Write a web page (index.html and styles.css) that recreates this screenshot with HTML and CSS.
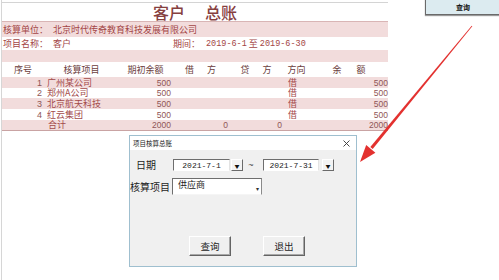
FILE: index.html
```html
<!DOCTYPE html>
<html lang="zh-CN">
<head>
    <meta charset="UTF-8">
    <title>客户总账</title>
    <link rel="stylesheet" href="styles.css">
</head>
<body>

<div class="page">
    <div class="sheet">
        <div class="title"><span>客户</span><span>总账</span></div>

        <div class="info unit pink">
            <span class="label">核算单位：</span>
            <span>北京时代传奇教育科技发展有限公司</span>
        </div>
        <div class="info name-row">
            <span class="label">项目名称：</span>
            <span class="value">客户</span>
            <span>期间：</span>
            <span class="date first">2019-6-1</span>
            <span>至</span>
            <span class="date">2019-6-30</span>
        </div>
        <div class="blank pink"></div>

        <div class="grid head">
            <span>序号</span>
            <span>核算项目</span>
            <span>期初余额</span>
            <span class="split"><span>借</span><span>方</span></span>
            <span class="split"><span>贷</span><span>方</span></span>
            <span>方向</span>
            <span class="split wide"><span>余</span><span>额</span></span>
        </div>

        <div class="grid data pink tall">
            <span class="num">1</span><span class="name">广州某公司</span><span class="amt">500</span>
            <span></span><span></span><span class="dir">借</span><span class="amt">500</span>
        </div>
        <div class="grid data short">
            <span class="num">2</span><span class="name">郑州A公司</span><span class="amt">500</span>
            <span></span><span></span><span class="dir">借</span><span class="amt">500</span>
        </div>
        <div class="grid data pink tall">
            <span class="num">3</span><span class="name">北京航天科技</span><span class="amt">500</span>
            <span></span><span></span><span class="dir">借</span><span class="amt">500</span>
        </div>
        <div class="grid data tall">
            <span class="num">4</span><span class="name">红云集团</span><span class="amt">500</span>
            <span></span><span></span><span class="dir">借</span><span class="amt">500</span>
        </div>
        <div class="grid data pink short total">
            <span></span><span class="name">合计</span><span class="amt">2000</span>
            <span class="amt">0</span><span class="amt">0</span><span></span><span class="amt">2000</span>
        </div>
    </div>
</div>

<div class="sheet-button">查询</div>

<svg class="arrow" width="499" height="280" viewBox="0 0 499 280">
    <polygon points="472.3,26.3 372.7,149.0 370.3,147.0 471.7,25.7" fill="#e3312f"/>
    <polygon points="360,162 375.4,152.7 366.2,145.1" fill="#e3312f"/>
</svg>

<div class="dialog">
    <div class="dlg-title">
        <span>项目核算总账</span>
        <svg class="close" width="7" height="7" viewBox="0 0 7 7">
            <path d="M0.5 0.5 L6.5 6.5 M6.5 0.5 L0.5 6.5" stroke="#333" stroke-width="0.9"/>
        </svg>
    </div>
    <div class="dlg-body">
        <div class="dlg-row dates">
            <span class="dlg-label date-label">日期</span>
            <span class="field">2021-7-1</span>
            <span class="drop">▼</span>
            <span class="tilde">~</span>
            <span class="field second">2021-7-31</span>
            <span class="drop far">▼</span>
        </div>
        <div class="dlg-row items">
            <span class="dlg-label item-label">核算项目</span>
            <span class="combo"><span>供应商</span><span class="combo-arrow">▾</span></span>
        </div>
        <div class="dlg-actions">
            <button class="btn">查询</button>
            <button class="btn">退出</button>
        </div>
    </div>
</div>

</body>
</html>
```

FILE: styles.css
```css
body {
    margin: 0;
    width: 499px;
    height: 280px;
    overflow: hidden;
    position: relative;
    background: #fff;
    font-family: "Noto Sans CJK SC", "Liberation Sans", sans-serif;
}
.page {
    box-sizing: border-box;
    height: 280px;
    margin-left: 1px;
    padding-top: 2px;
    border-left: 1px solid #d6d6d6;
}
.sheet {
    width: 386px;
    border-top: 1px solid #d4d4d4;
    border-bottom: 1px solid #c9a3a3;
}
.pink {
    background-color: #f2dcdc;
}
.title {
    height: 18px;
    display: flex;
    justify-content: center;
    gap: 20px;
    font-size: 16px;
    line-height: 18px;
    font-weight: 500;
    color: #86403f;
}
.info {
    display: flex;
    align-items: center;
    padding-left: 1px;
    font-size: 9px;
    line-height: 10px;
    color: #a34545;
}
.unit {
    height: 15px;
    border-top: 1px solid #d9b5b5;
}
.name-row {
    height: 13px;
}
.info .label {
    width: 50px;
}
.info .value {
    width: 120px;
}
.date {
    font-family: "Liberation Mono", monospace;
    font-size: 8.5px;
    margin-right: 2px;
}
.date.first {
    margin-left: 6px;
}
.date + span {
    margin-right: 2px;
}
.blank {
    height: 12px;
}
.grid {
    display: grid;
    grid-template-columns: 42px 75px 53px 57px 54px 27px 78px;
    align-items: center;
    font-size: 9px;
    line-height: 10px;
}
.head {
    height: 15px;
    color: #6b3d3d;
    text-align: center;
}
.split {
    display: flex;
    justify-content: center;
    gap: 13px;
}
.split.wide {
    gap: 15px;
}
.data {
    color: #a34a4a;
}
.tall {
    height: 11px;
}
.short {
    height: 10px;
}
.num {
    text-align: right;
    padding-right: 2px;
    font-family: "Liberation Sans", sans-serif;
    color: #8f5656;
}
.name {
    padding-left: 3px;
}
.total .name {
    padding-left: 4px;
}
.amt {
    text-align: right;
    padding-right: 1px;
    font-family: "Liberation Sans", sans-serif;
    font-size: 8.5px;
    color: #8f5656;
}
.grid .amt:last-child {
    padding-right: 0;
}
.dir {
    padding-left: 5px;
}

/* button floating on the sheet */
.sheet-button {
    position: absolute;
    left: 425px;
    top: -2px;
    width: 80px;
    height: 17px;
    box-sizing: border-box;
    padding-left: 30px;
    display: flex;
    align-items: center;
    background: #dcebf0;
    border: 1px solid #6a6a6a;
    box-shadow: 0 1px 1px #9a9a9a;
    font-size: 7px;
    font-weight: 700;
    color: #111;
}

.arrow {
    position: absolute;
    left: 0;
    top: 0;
}

/* dialog window */
.dialog {
    position: absolute;
    left: 129px;
    top: 135px;
    width: 226px;
    height: 130px;
    border: 1px solid #9fbfcf;
    background: #f0f0f0;
}
.dlg-title {
    height: 14px;
    display: flex;
    align-items: center;
    padding-left: 3px;
    background: #fff;
    font-size: 6.5px;
    color: #222;
}
.close {
    margin-left: auto;
    margin-right: 6px;
}
.dlg-row {
    display: flex;
    align-items: center;
}
.dlg-label {
    font-size: 10px;
    line-height: 12px;
    color: #1e1e1e;
}
.dates {
    height: 12px;
    margin-top: 9px;
    padding-left: 6px;
}
.date-label {
    width: 37px;
}
.field {
    box-sizing: border-box;
    width: 57px;
    height: 12px;
    display: flex;
    align-items: center;
    justify-content: center;
    background: #fff;
    border-top: 1px solid #6e6e6e;
    border-left: 1px solid #6e6e6e;
    border-right: 1px solid #e3e3e3;
    border-bottom: 1px solid #fff;
    font-family: "Liberation Mono", monospace;
    font-size: 8px;
    color: #222;
}
.field.second {
    width: 56px;
}
.drop {
    box-sizing: border-box;
    width: 12px;
    height: 12px;
    margin-left: 1px;
    display: flex;
    align-items: center;
    justify-content: center;
    background: #f3f3f3;
    border-top: 1px solid #fff;
    border-left: 1px solid #fff;
    border-right: 1px solid #6a6a6a;
    border-bottom: 1px solid #6a6a6a;
    font-size: 5px;
    color: #111;
}
.drop.far {
    margin-left: 3px;
}
.tilde {
    width: 16px;
    margin-right: 4px;
    text-align: center;
    font-family: "Liberation Sans", sans-serif;
    font-size: 9px;
    color: #444;
}
.items {
    height: 17px;
    margin-top: 7px;
}
.item-label {
    width: 42px;
}
.combo {
    box-sizing: border-box;
    width: 90px;
    height: 17px;
    display: flex;
    justify-content: space-between;
    padding: 0 2px 0 5px;
    background: #fff;
    border-top: 1px solid #6e6e6e;
    border-left: 1px solid #6e6e6e;
    border-right: 1px solid #8a8a8a;
    border-bottom: 1px solid #f5f5f5;
    font-size: 9px;
    line-height: 11px;
    color: #222;
}
.combo-arrow {
    align-self: center;
    margin-top: 4px;
    font-size: 6px;
    line-height: 6px;
    color: #333;
}
.dlg-actions {
    display: flex;
    gap: 32px;
    margin-top: 41px;
    padding-left: 59px;
}
.btn {
    box-sizing: border-box;
    width: 42px;
    height: 20px;
    padding: 0;
    background: #f0f0f0;
    border-top: 1px solid #fff;
    border-left: 1px solid #fff;
    border-right: 1px solid #646464;
    border-bottom: 1px solid #646464;
    box-shadow: inset -1px -1px 0 #a8a8a8;
    font-family: "Noto Sans CJK SC", sans-serif;
    font-size: 9.5px;
    color: #1e1e1e;
}
```
